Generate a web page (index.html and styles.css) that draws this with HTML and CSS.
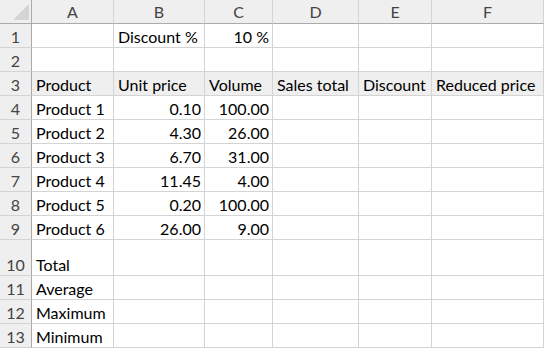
FILE: index.html
```html
<!DOCTYPE html>
<html>
<head>
<meta charset="utf-8">
<link rel="stylesheet" href="styles.css">
</head>
<body>
<div class="sheet">
  <div class="corner"><svg class="tri" width="16" height="16" viewBox="0 0 16 16"><polygon points="16,0 16,16 0,16" fill="#d4d4d4"/></svg></div>
  <div class="ch">A</div><div class="ch">B</div><div class="ch">C</div><div class="ch">D</div><div class="ch">E</div><div class="ch">F</div>

  <div class="rh">1</div><div class="c"></div><div class="c">Discount %</div><div class="c r">10 %</div><div class="c"></div><div class="c"></div><div class="c"></div>
  <div class="rh">2</div><div class="c"></div><div class="c"></div><div class="c"></div><div class="c"></div><div class="c"></div><div class="c"></div>
  <div class="rh">3</div><div class="c s">Product</div><div class="c s">Unit price</div><div class="c s">Volume</div><div class="c s">Sales total</div><div class="c s">Discount</div><div class="c s">Reduced price</div>
  <div class="rh">4</div><div class="c">Product 1</div><div class="c r">0.10</div><div class="c r">100.00</div><div class="c"></div><div class="c"></div><div class="c"></div>
  <div class="rh">5</div><div class="c">Product 2</div><div class="c r">4.30</div><div class="c r">26.00</div><div class="c"></div><div class="c"></div><div class="c"></div>
  <div class="rh">6</div><div class="c">Product 3</div><div class="c r">6.70</div><div class="c r">31.00</div><div class="c"></div><div class="c"></div><div class="c"></div>
  <div class="rh">7</div><div class="c">Product 4</div><div class="c r">11.45</div><div class="c r">4.00</div><div class="c"></div><div class="c"></div><div class="c"></div>
  <div class="rh">8</div><div class="c">Product 5</div><div class="c r">0.20</div><div class="c r">100.00</div><div class="c"></div><div class="c"></div><div class="c"></div>
  <div class="rh">9</div><div class="c">Product 6</div><div class="c r">26.00</div><div class="c r">9.00</div><div class="c"></div><div class="c"></div><div class="c"></div>
  <div class="rh">10</div><div class="c">Total</div><div class="c"></div><div class="c"></div><div class="c"></div><div class="c"></div><div class="c"></div>
  <div class="rh">11</div><div class="c">Average</div><div class="c"></div><div class="c"></div><div class="c"></div><div class="c"></div><div class="c"></div>
  <div class="rh">12</div><div class="c">Maximum</div><div class="c"></div><div class="c"></div><div class="c"></div><div class="c"></div><div class="c"></div>
  <div class="rh">13</div><div class="c">Minimum</div><div class="c"></div><div class="c"></div><div class="c"></div><div class="c"></div><div class="c"></div>
</div>
</body>
</html>
```
FILE: styles.css
```css
html, body {
  margin: 0;
  padding: 0;
  background: #ffffff;
}
.sheet {
  display: grid;
  grid-template-columns: 32px 82px 91px 68px 86px 73px 112px;
  grid-template-rows: repeat(10, 24px) 36px 24px 24px 24px;
  font-family: "Lato", "Open Sans", sans-serif;
  font-size: 16px;
  color: #000000;
}
.corner {
  background: #efefef;
  border-right: 1px solid #ababab;
  border-bottom: 1px solid #ababab;
  box-sizing: border-box;
  position: relative;
}
.tri {
  position: absolute;
  left: 13px;
  top: 4px;
}
.ch {
  background: #efefef;
  border-right: 1px solid #d4d4d4;
  border-bottom: 1px solid #ababab;
  box-sizing: border-box;
  display: flex;
  align-items: center;
  justify-content: center;
  color: #444444;
  font-size: 16px;
}
.ch:last-of-type {
  border-right: 1px solid #ababab;
}
.rh {
  background: #efefef;
  border-right: 1px solid #ababab;
  border-bottom: 1px solid #d4d4d4;
  box-sizing: border-box;
  display: flex;
  align-items: flex-end;
  justify-content: center;
  padding-bottom: 0;
  line-height: 20px;
  color: #444444;
}
.c {
  border-right: 1px solid #d4d4d4;
  border-bottom: 1px solid #d4d4d4;
  box-sizing: border-box;
  display: flex;
  align-items: flex-end;
  padding: 0 3px 0 4px;
  line-height: 20px;
  white-space: nowrap;
  overflow: visible;
}
.r {
  justify-content: flex-end;
}
.s {
  background: #efefef;
}
```
